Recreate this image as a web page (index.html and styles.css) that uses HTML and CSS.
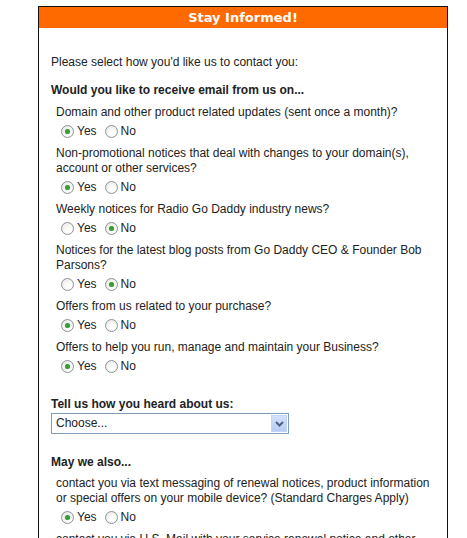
FILE: index.html
```html
<!DOCTYPE html>
<html lang="en">

<head>
    <meta charset="UTF-8">
    <meta name="viewport" content="width=device-width, initial-scale=1.0">
    <title>Stay Informed!</title>
    <link rel="stylesheet" href="styles.css">
</head>

<body>

    <div class="panel">
        <div class="panel-title">Stay Informed!</div>

        <div class="panel-body">
            <p class="intro">Please select how you'd like us to contact you:</p>

            <h2>Would you like to receive email from us on...</h2>
            <div class="questions">
                <div class="question">
                    <p>Domain and other product related updates (sent once a month)?</p>
                    <div class="choice">
                        <span class="radio on"></span><span class="label">Yes</span>
                        <span class="radio"></span><span class="label">No</span>
                    </div>
                </div>
                <div class="question">
                    <p>Non-promotional notices that deal with changes to your domain(s), account or other services?</p>
                    <div class="choice">
                        <span class="radio on"></span><span class="label">Yes</span>
                        <span class="radio"></span><span class="label">No</span>
                    </div>
                </div>
                <div class="question">
                    <p>Weekly notices for Radio Go Daddy industry news?</p>
                    <div class="choice">
                        <span class="radio"></span><span class="label">Yes</span>
                        <span class="radio on"></span><span class="label">No</span>
                    </div>
                </div>
                <div class="question">
                    <p>Notices for the latest blog posts from Go Daddy CEO &amp; Founder Bob Parsons?</p>
                    <div class="choice">
                        <span class="radio"></span><span class="label">Yes</span>
                        <span class="radio on"></span><span class="label">No</span>
                    </div>
                </div>
                <div class="question">
                    <p>Offers from us related to your purchase?</p>
                    <div class="choice">
                        <span class="radio on"></span><span class="label">Yes</span>
                        <span class="radio"></span><span class="label">No</span>
                    </div>
                </div>
                <div class="question">
                    <p>Offers to help you run, manage and maintain your Business?</p>
                    <div class="choice">
                        <span class="radio on"></span><span class="label">Yes</span>
                        <span class="radio"></span><span class="label">No</span>
                    </div>
                </div>
            </div>

            <h2 class="heard">Tell us how you heard about us:</h2>
            <div class="dropdown">
                <span class="dropdown-text">Choose...</span>
                <span class="dropdown-button">
                    <svg width="9" height="6" viewBox="0 0 9 6">
                        <path d="M1 1 L4.5 4.5 L8 1" fill="none" stroke="#4d6185" stroke-width="2"/>
                    </svg>
                </span>
            </div>

            <h2 class="also">May we also...</h2>
            <div class="questions">
                <div class="question">
                    <p>contact you via text messaging of renewal notices, product information or special offers on your mobile device? (Standard Charges Apply)</p>
                    <div class="choice">
                        <span class="radio on"></span><span class="label">Yes</span>
                        <span class="radio"></span><span class="label">No</span>
                    </div>
                </div>
                <div class="question">
                    <p>contact you via U.S. Mail with your service renewal notice and other important account information?</p>
                    <div class="choice">
                        <span class="radio on"></span><span class="label">Yes</span>
                        <span class="radio"></span><span class="label">No</span>
                    </div>
                </div>
            </div>
        </div>
    </div>

</body>

</html>
```

FILE: styles.css
```css
* {
    margin: 0;
    padding: 0;
    box-sizing: border-box;
}

body {
    font-family: "Liberation Sans", Arial, sans-serif;
    font-size: 12px;
    line-height: 15px;
    color: #222;
    background-color: #ffffff;
}

.panel {
    width: 410px;
    margin: 6px 0 0 38px;
    border: 1px solid #111;
}

.panel-title {
    background-color: #ff6a00;
    color: #ffffff;
    font-family: "DejaVu Sans", Verdana, sans-serif;
    font-weight: bold;
    font-size: 13px;
    height: 21px;
    line-height: 21px;
    text-align: center;
}

.panel-body {
    padding: 27px 4px 20px 12px;
}

.intro {
    margin-bottom: 13px;
}

h2 {
    font-size: 12px;
    font-weight: bold;
    margin-bottom: 7px;
}

.questions {
    padding-left: 5px;
}

.question {
    margin-bottom: 5px;
}

.choice {
    display: flex;
    align-items: center;
    height: 19px;
    margin-top: 2px;
    padding-left: 5px;
}

.radio {
    width: 13px;
    height: 13px;
    border: 1px solid #8d9299;
    border-radius: 50%;
    background: radial-gradient(circle at 60% 65%, #ffffff 20%, #e6e6e0 90%);
    display: inline-flex;
    align-items: center;
    justify-content: center;
    margin-right: 3px;
}

.radio.on::after {
    content: '';
    width: 5px;
    height: 5px;
    border-radius: 50%;
    background: #3a9d3a;
    box-shadow: 0 0 1px #7ccc7c;
}

.label {
    margin-right: 8px;
}

.heard {
    margin-top: 20px;
    margin-bottom: 0;
    line-height: 17px;
}

.dropdown {
    display: flex;
    align-items: stretch;
    width: 238px;
    height: 21px;
    border: 1px solid #7f9db9;
    background-color: #ffffff;
}

.dropdown-text {
    flex: 1;
    padding-left: 4px;
    line-height: 19px;
}

.dropdown-button {
    width: 16px;
    margin: 1px;
    background: linear-gradient(#d4e0fd, #b9cbf5);
    border: 1px solid #c3d3fb;
    display: flex;
    align-items: center;
    justify-content: center;
}

.also {
    margin-top: 21px;
    margin-bottom: 6px;
}
```
